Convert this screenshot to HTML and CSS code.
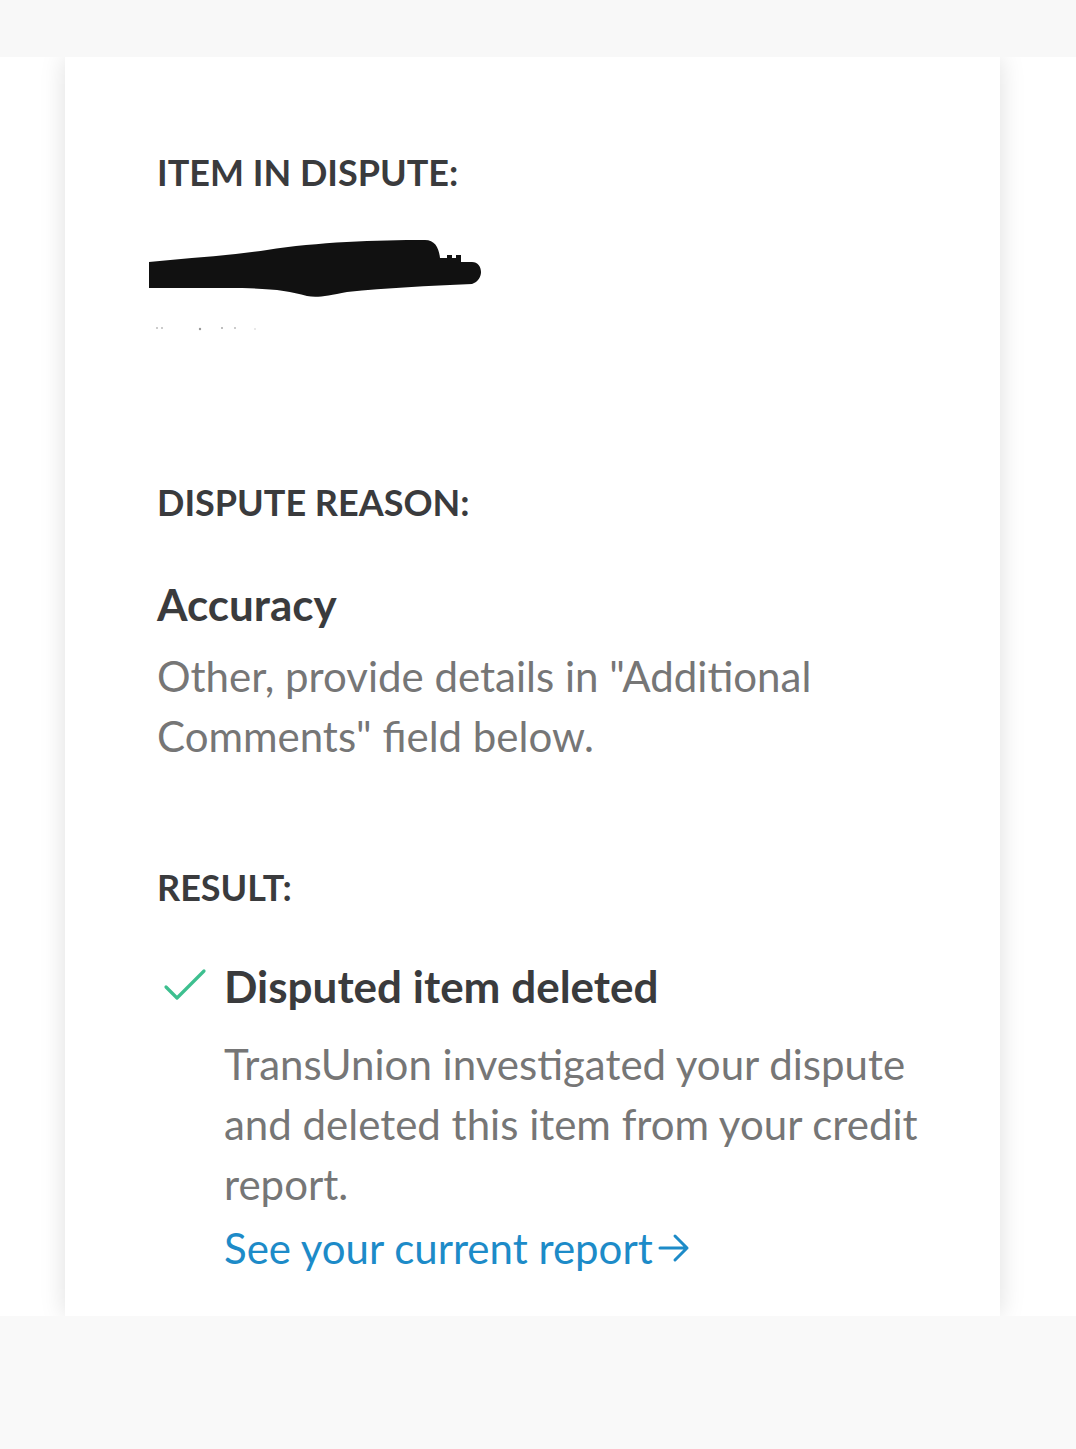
FILE: index.html
```html
<!DOCTYPE html>
<html lang="en">
<head>
  <meta charset="UTF-8">
  <meta name="viewport" content="width=device-width, initial-scale=1.0">
  <title>Dispute Details</title>
  <link rel="stylesheet" href="styles.css">
</head>
<body>
  <div class="top-band"></div>

  <div class="stage">
    <main class="card">
      <!-- Item in dispute -->
      <section class="block">
        <h2 class="label">ITEM IN DISPUTE:</h2>
        <svg class="redacted" width="340" height="100" viewBox="0 0 340 100" aria-hidden="true">
          <path d="M2 26 C40 22 80 20 120 14 C170 6 230 4 278 4 C288 4 292 12 293 22 L300 22 L300 19 L305 19 L305 22 L309 22 L309 19 L314 19 L314 26 L325 26 C336 26 338 44 325 48 C280 50 240 52 200 56 C180 60 170 62 160 60 C140 54 120 52 80 52 C40 52 20 52 2 52 Z" fill="#111"/>
          <circle cx="10" cy="92" r="1" fill="#bbb"/>
          <circle cx="15" cy="92" r="1" fill="#bbb"/>
          <circle cx="53" cy="93" r="1.2" fill="#999"/>
          <circle cx="75" cy="92" r="1" fill="#aaa"/>
          <circle cx="88" cy="92" r="1" fill="#bbb"/>
          <circle cx="108" cy="93" r="0.8" fill="#ccc"/>
        </svg>
      </section>

      <!-- Dispute reason -->
      <section class="block reason">
        <h2 class="label">DISPUTE REASON:</h2>
        <h3 class="title">Accuracy</h3>
        <p class="desc">Other, provide details in "Additional Comments" field below.</p>
      </section>

      <!-- Result -->
      <section class="block result">
        <h2 class="label">RESULT:</h2>
        <div class="outcome">
          <svg class="check" width="46" height="36" viewBox="0 0 46 36" aria-hidden="true">
            <path d="M4 20 L15 31 L42 4" fill="none" stroke="#3dbf8f" stroke-width="3.2" stroke-linecap="round" stroke-linejoin="round"/>
          </svg>
          <div class="outcome-body">
            <h3 class="title">Disputed item deleted</h3>
            <p class="desc">TransUnion investigated your dispute and deleted this item from your credit report.</p>
            <a class="link" href="#">See your current report<svg class="arrow" width="34" height="30" viewBox="0 0 34 30" aria-hidden="true"><path d="M3 15 H30 M18 3 L30 15 L18 27" fill="none" stroke="#1d8bc8" stroke-width="3" stroke-linecap="round" stroke-linejoin="round"/></svg></a>
          </div>
        </div>
      </section>
    </main>
  </div>

  <div class="bottom-band"></div>
</body>
</html>
```

FILE: styles.css
```css
/* General Styles */
body {
  font-family: 'Lato', 'Noto Sans', sans-serif;
  margin: 0;
  padding: 0;
  background-color: #f8f8f8;
  color: #3a3b3d;
}

.top-band {
  height: 57px;
  background-color: #f8f8f8;
}

.bottom-band {
  height: 133px;
  background-color: #f9f9f9;
}

/* Stage with the card */
.stage {
  background-color: #fff;
  overflow: hidden;
  padding: 0 76px 0 65px;
}

.card {
  background-color: #fff;
  padding: 95px 30px 38px 92px;
  box-shadow: 0 0 24px rgba(0, 0, 0, 0.13);
}

/* Text */
.label {
  margin: 0;
  font-size: 36px;
  line-height: 40px;
  font-weight: 700;
  color: #3a3b3d;
}

.title {
  margin: 0;
  font-size: 44px;
  line-height: 50px;
  font-weight: 700;
  color: #3a3b3d;
}

.desc {
  margin: 0;
  font-size: 42px;
  line-height: 60px;
  color: #767676;
}

/* Item in dispute */
.redacted {
  display: block;
  margin: 44px 0 0 -10px;
}

/* Dispute reason */
.reason {
  margin-top: 146px;
}

.reason .title {
  margin-top: 57px;
}

.reason .desc {
  margin-top: 17px;
  max-width: 700px;
}

/* Result */
.result {
  margin-top: 101px;
}

.outcome {
  display: flex;
  gap: 16px;
  margin-top: 54px;
  margin-left: 5px;
}

.check {
  flex: none;
  margin-top: 6px;
}

.outcome .desc {
  margin-top: 23px;
  max-width: 712px;
}

.link {
  display: inline-flex;
  align-items: center;
  margin-top: 4px;
  font-size: 42px;
  line-height: 60px;
  color: #1d8bc8;
  text-decoration: none;
}

.arrow {
  margin-left: 4px;
}
```
